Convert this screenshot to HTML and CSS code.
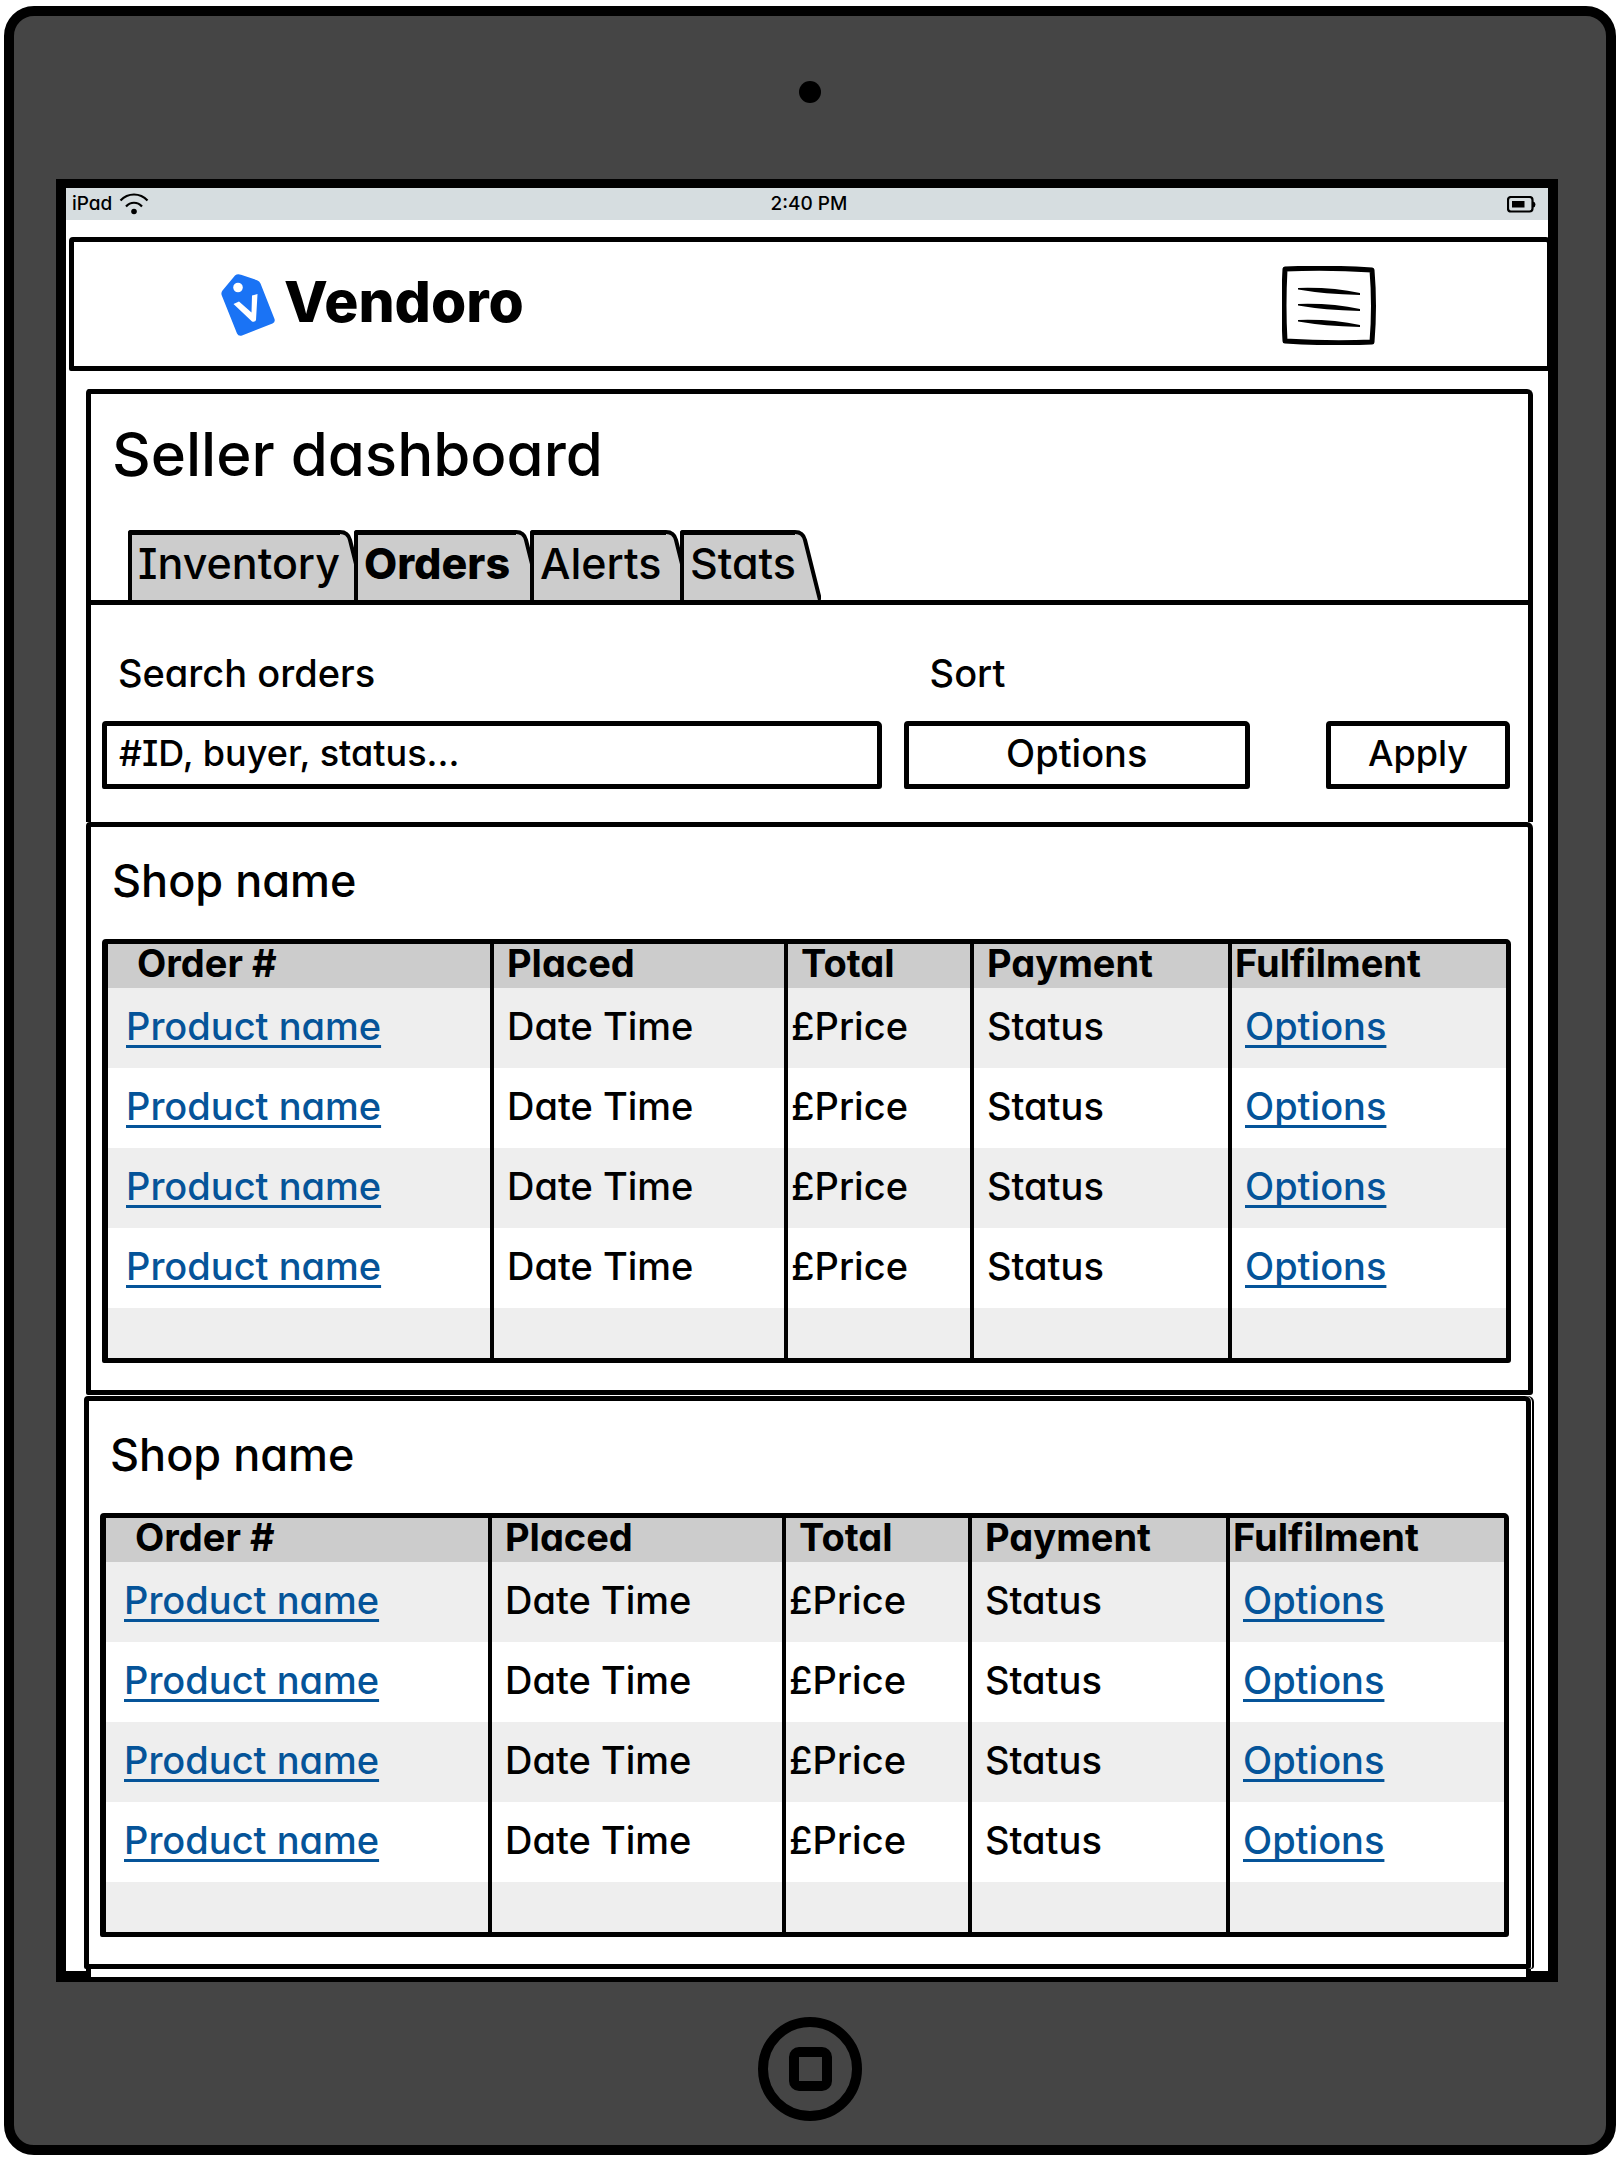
FILE: index.html
```html
<!DOCTYPE html>
<html lang="en">
<head>
<meta charset="utf-8">
<meta name="viewport" content="width=device-width, initial-scale=1">
<title>Vendoro – Seller dashboard</title>
<link rel="stylesheet" href="styles.css">
</head>
<body>
<div class="tablet">
  <div class="bezel"><span class="camera"></span></div>
  <div class="screen">
    <div class="status-bar">
      <span class="carrier">iPad
        <svg class="wifi" viewBox="0 0 30 22" aria-hidden="true"><path d="M1.500 7.500C9-.5 21-.5 28.500 7.500M7 13.500C11.500 8.500 18.500 8.500 23 13.500" fill="none" stroke="#000" stroke-width="2.200"/><circle cx="15" cy="18.500" r="2.800"/></svg>
      </span>
      <span class="clock">2:40 PM</span>
      <svg class="battery" viewBox="0 0 29 17" aria-hidden="true"><rect x="1" y="1" width="24.500" height="14.500" rx="3" fill="none" stroke="#000" stroke-width="2.200"/><path d="M5 5h12.500v6.500H5zM26 5.500q2.500.500 2.500 3t-2.500 3z"/></svg>
    </div>
    <header class="site-header">
      <a class="brand" href="#">
        <svg class="tag" viewBox="0 0 54 62" aria-hidden="true"><path d="M14 1.500Q16.500-.5 20 .800L36 6.200Q38.500 7 39.500 9.500L53.500 45Q54.500 48 51.500 49.500L21 61.500Q17.500 62.500 16 59.500L.800 21.500Q-.3 18.800 1.500 16.500Z" fill="#1a73f5"/><circle cx="17" cy="13.500" r="4.800" fill="#fff"/><path d="M12.500 30L18 27.500 30.500 38.500 31 21.500 36.500 20 35 46Q34 48.500 31 47.500Z" fill="#fff"/></svg>
        <span class="brand-name">Vendoro</span>
      </a>
      <button class="menu" type="button" aria-label="Menu">
        <svg viewBox="0 0 94 79" aria-hidden="true"><path d="M3 3Q45 1 90 4Q93 40 90 76Q50 78 3 75Q1 40 3 3Z" fill="none" stroke="#000" stroke-width="5" stroke-linejoin="round"/><path d="M16 22Q50 21 78 27V29Q42 28 16 23.500ZM16 38Q50 37 78 43V45Q42 44 16 39.500ZM16 54Q50 53 78 59V61Q42 60 16 55.500Z"/></svg>
      </button>
    </header>
    <main>
      <section class="dashboard">
        <h1>Seller dashboard</h1>
        <nav class="tabs">
          <button class="tab" type="button">Inventory<svg viewBox="0 0 26 70" aria-hidden="true"><path d="M0 2Q8 2 10 10L25 70H0Z"/><path class="edge" d="M0 2Q8 2 10 10L25 70"/></svg></button>
          <button class="tab current" type="button">Orders<svg viewBox="0 0 26 70" aria-hidden="true"><path d="M0 2Q8 2 10 10L25 70H0Z"/><path class="edge" d="M0 2Q8 2 10 10L25 70"/></svg></button>
          <button class="tab" type="button">Alerts<svg viewBox="0 0 26 70" aria-hidden="true"><path d="M0 2Q8 2 10 10L25 70H0Z"/><path class="edge" d="M0 2Q8 2 10 10L25 70"/></svg></button>
          <button class="tab" type="button">Stats<svg viewBox="0 0 26 70" aria-hidden="true"><path d="M0 2Q8 2 10 10L25 70H0Z"/><path class="edge" d="M0 2Q8 2 10 10L25 70"/></svg></button>
        </nav>
      </section>
      <form class="filters">
        <div class="field search">
          <label for="search">Search orders</label>
          <input id="search" type="text" placeholder="#ID, buyer, status...">
        </div>
        <div class="field sort">
          <label for="sort">Sort</label>
          <select id="sort"><option>Options</option></select>
        </div>
        <button class="apply" type="button">Apply</button>
      </form>
      <section class="shop">
        <h2>Shop name</h2>
        <table>
          <colgroup><col class="c-order"><col class="c-placed"><col class="c-total"><col class="c-payment"><col></colgroup>
          <thead><tr><th>Order #</th><th>Placed</th><th>Total</th><th>Payment</th><th>Fulfilment</th></tr></thead>
          <tbody>
            <tr><td><a href="#">Product name</a></td><td>Date Time</td><td>£Price</td><td>Status</td><td><a href="#">Options</a></td></tr>
            <tr><td><a href="#">Product name</a></td><td>Date Time</td><td>£Price</td><td>Status</td><td><a href="#">Options</a></td></tr>
            <tr><td><a href="#">Product name</a></td><td>Date Time</td><td>£Price</td><td>Status</td><td><a href="#">Options</a></td></tr>
            <tr><td><a href="#">Product name</a></td><td>Date Time</td><td>£Price</td><td>Status</td><td><a href="#">Options</a></td></tr>
            <tr class="spare"><td></td><td></td><td></td><td></td><td></td></tr>
          </tbody>
        </table>
      </section>
      <section class="shop second">
        <h2>Shop name</h2>
        <table>
          <colgroup><col class="c-order"><col class="c-placed"><col class="c-total"><col class="c-payment"><col></colgroup>
          <thead><tr><th>Order #</th><th>Placed</th><th>Total</th><th>Payment</th><th>Fulfilment</th></tr></thead>
          <tbody>
            <tr><td><a href="#">Product name</a></td><td>Date Time</td><td>£Price</td><td>Status</td><td><a href="#">Options</a></td></tr>
            <tr><td><a href="#">Product name</a></td><td>Date Time</td><td>£Price</td><td>Status</td><td><a href="#">Options</a></td></tr>
            <tr><td><a href="#">Product name</a></td><td>Date Time</td><td>£Price</td><td>Status</td><td><a href="#">Options</a></td></tr>
            <tr><td><a href="#">Product name</a></td><td>Date Time</td><td>£Price</td><td>Status</td><td><a href="#">Options</a></td></tr>
            <tr class="spare"><td></td><td></td><td></td><td></td><td></td></tr>
          </tbody>
        </table>
      </section>
      <div class="panel-end"></div>
    </main>
  </div>
  <div class="bezel">
    <button class="home" type="button" aria-label="Home"><span></span></button>
  </div>
</div>
</body>
</html>
```
FILE: styles.css
```css
* { box-sizing: border-box; }

body {
  margin: 0;
  padding: 6px 4px 4px;
  background: #fff;
  color: #000;
  font-family: Inter, "Noto Sans", sans-serif;
  font-feature-settings: "cv11", "cv08";
  font-size: 38px;
  font-weight: 500;
  line-height: 48px;
}

button, input, select { font: inherit; color: inherit; font-feature-settings: inherit; margin: 0; }

.tablet {
  border: 10px solid #000;
  border-radius: 30px;
  background: #454545;
}

.bezel {
  height: 163px;
  display: flex;
  align-items: center;
  justify-content: center;
}

.camera { width: 22px; height: 22px; margin-bottom: 12px; border-radius: 50%; background: #000; }

.home {
  width: 104px;
  height: 104px;
  margin-top: 10px;
  padding: 0;
  display: flex;
  align-items: center;
  justify-content: center;
  border: 10px solid #000;
  border-radius: 50%;
  background: none;
}

.home span { width: 43px; height: 44px; border: 10px solid #000; border-radius: 10px; }

.screen {
  margin: 0 48px 0 42px;
  border: 10px solid #000;
  border-top-width: 9px;
  border-bottom-width: 11px;
  background: #fff;
}

.status-bar {
  display: grid;
  grid-template-columns: 1fr auto 1fr;
  align-items: center;
  height: 32px;
  padding: 0 12px 0 6px;
  background: #d6dde0;
  font-size: 19px;
  line-height: 24px;
}

.carrier { display: flex; align-items: center; gap: 7px; }
.clock { padding-left: 10px; }
.wifi { width: 30px; height: 22px; }
.battery { width: 29px; height: 17px; justify-self: end; }

.site-header {
  display: flex;
  align-items: center;
  justify-content: space-between;
  height: 134px;
  margin: 17px -4px 0 3px;
  padding: 2px 171px 0 147px;
  border: 5px solid #000;
  border-radius: 4px 6px 3px 2px;
  background: #fff;
}

.brand {
  display: flex;
  align-items: center;
  gap: 9px;
  color: #000;
  font-size: 57px;
  font-weight: 800;
  line-height: 72px;
  text-decoration: none;
}

.brand-name { padding-bottom: 6px; }

.tag { width: 54px; height: 62px; }

.menu { width: 94px; height: 79px; padding: 0; border: 0; background: none; }
.menu svg { display: block; width: 100%; height: 100%; }

main { padding: 18px 15px 0 20px; }

.dashboard {
  padding: 24px 0 0;
  border: 5px solid #000;
  border-bottom: 0;
  border-radius: 4px 6px 0 0;
}

h1 { margin: 0 0 40px; padding-left: 21px; font-size: 60px; font-weight: 500; line-height: 72px; }

.tabs {
  position: relative;
  z-index: 0;
  display: grid;
  grid-template-columns: 226px 176px 150px 129px;
  height: 70px;
  padding-left: 37px;
}

.tab {
  position: relative;
  height: 70px;
  margin-right: 14px;
  padding: 0 0 10px 6px;
  border: 0 solid #000;
  border-width: 5px 0 0 4px;
  border-radius: 3px 0 0 0;
  background: #ccc;
  font-size: 43px;
  line-height: 56px;
  text-align: left;
  white-space: nowrap;
}

.tab svg { position: absolute; top: -5px; right: -26px; width: 26px; height: 70px; fill: #ccc; z-index: -1; }
.tab svg .edge { fill: none; stroke: #000; stroke-width: 4; }
.current { font-weight: 800; }

.filters {
  display: flex;
  align-items: flex-end;
  gap: 22px;
  padding: 44px 18px 33px 11px;
  border: 5px solid #000;
  border-bottom: 0;
}

.field { display: flex; flex-direction: column; gap: 24px; min-width: 0; }
.field label { padding-left: 16px; }
.search { flex: 779 1 0; }
.sort { flex: 346 1 0; }
.sort label { padding-left: 26px; }

.field input, .field select, .apply {
  width: 100%;
  height: 68px;
  padding: 0 12px 4px;
  border: 5px solid #000;
  border-radius: 4px 5px 3px 2px;
  background: #fff;
  appearance: none;
}

.field input, .filters .apply { font-size: 36px; }
.field input::placeholder { color: #000; opacity: 1; }
.field select { text-align: center; text-align-last: center; }
.filters .apply { flex: 174 1 0; margin-left: 54px; padding: 0 0 4px; }

.shop {
  padding: 27px 17px 27px 11px;
  border: 5px solid #000;
  border-radius: 4px 6px 3px 2px;
}

.second {
  margin: 1px 2px 0 -2px;
  box-shadow: 1px 0 #fff, 3px 0 #000;
}

h2 { margin: 0 0 31px; padding-left: 10px; font-size: 45px; font-weight: 500; line-height: 54px; }

table {
  width: 100%;
  table-layout: fixed;
  border: 5px solid #000;
  border-left-width: 6px;
  border-radius: 4px 5px 3px 2px;
  border-spacing: 0;
}

.c-order { width: 382px; }
.c-placed { width: 294px; }
.c-total { width: 186px; }
.c-payment { width: 258px; }

th, td { padding: 0 0 4px 13px; text-align: left; vertical-align: middle; white-space: nowrap; }
th { height: 44px; padding-bottom: 6px; background: #ccc; font-weight: 700; line-height: 38px; }
td { height: 80px; }
tbody tr:nth-child(odd) { background: #eee; }
th + th, td + td { border-left: 4px solid #000; }
th:first-child { padding-left: 29px; }
td:first-child { padding-left: 18px; }
td:nth-child(3), th:last-child { padding-left: 3px; }
.spare td { height: 50px; padding: 0; }

td a { color: #055499; text-decoration-thickness: 3px; text-underline-offset: 5px; text-decoration-skip-ink: none; }

.panel-end {
  height: 13px;
  margin: 0 2px -11px 0;
  border: 5px solid #000;
  border-top: 0;
  background: #fff;
}
```
